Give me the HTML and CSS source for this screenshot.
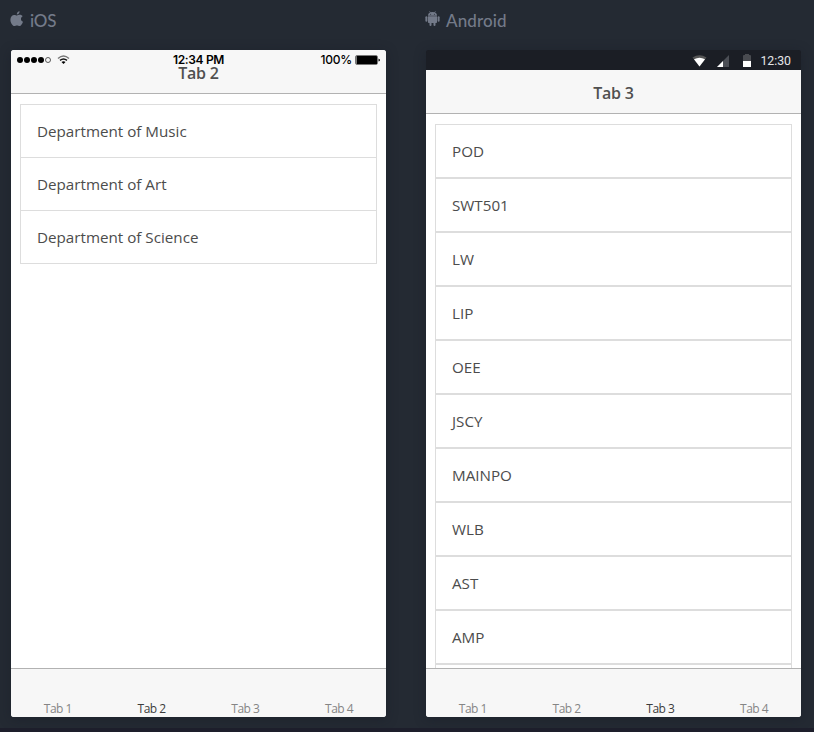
FILE: index.html
```html
<!DOCTYPE html>
<html lang="en">
<head>
<meta charset="utf-8">
<title>Preview</title>
<link rel="stylesheet" href="styles.css">
</head>
<body>
<main class="devices">
  <section class="device">
    <h2 class="platform">
      <svg class="apple" width="14" height="16" viewBox="0 0 14 16"><path d="M9.6 0.2C9.7 1.8 8.4 3.5 6.8 3.5 6.6 1.9 8 .4 9.600 .2zM6.900 4.500C7.700 4.500 8.500 3.800 9.900 3.800 11 3.800 12 4.400 12.600 5.200 10.200 6.700 10.600 9.700 13 10.700 12.400 12.500 11 15 9.600 15 8.600 15 8.200 14.400 7 14.400 5.800 14.400 5.300 15 4.400 15 2.500 15 .4 11.700 .4 8.700 .4 5.700 2.300 3.900 4.200 3.900 5.400 3.900 6.200 4.500 6.900 4.500z"/></svg>
      <span class="ios-label">iOS</span>
    </h2>
    <div class="phone">
      <header class="navbar ios-nav">
        <div class="ios-status">
          <div class="carrier">
            <svg width="54" height="12" viewBox="0 0 54 12"><circle cx="3" cy="6" r="3"/><circle cx="10" cy="6" r="3"/><circle cx="17" cy="6" r="3"/><circle cx="24" cy="6" r="3"/><circle cx="31" cy="6" r="2.500" fill="none" stroke="#333" stroke-width=".8"/><g fill="none" stroke="#111" stroke-width="1.400"><path d="M41 4.400Q46.500-.5 52 4.400" stroke="#777"/><path d="M43 6.400Q46.500 3.400 50 6.400"/></g><path d="M44.500 8Q46.500 6.400 48.500 8L46.500 10z"/></svg>
          </div>
          <span class="ios-time">12:34 PM</span>
          <span class="battery"><span>100%</span><svg width="25" height="10" viewBox="0 0 25 10"><rect x=".5" y=".5" width="22" height="9" rx="1.500" fill="none" stroke="#777"/><rect x="1.500" y="1" width="20.500" height="8" rx=".6"/><path d="M23.500 3.500Q25 4 25 5T23.500 6.500z"/></svg></span>
        </div>
        <h1 class="title">Tab 2</h1>
      </header>
      <div class="content">
        <ul class="list joined">
          <li><span>Department of Music</span></li>
          <li><span>Department of Art</span></li>
          <li><span>Department of Science</span></li>
        </ul>
      </div>
      <nav class="tabs"><a>Tab 1</a><a class="active">Tab 2</a><a>Tab 3</a><a>Tab 4</a></nav>
    </div>
  </section>
  <section class="device">
    <h2 class="platform">
      <svg class="robot" width="15" height="16" viewBox="0 0 15 16"><path d="M3 4.700C3 2.900 4 2 5 1.500L4.300.4 4.700.1 5.500 1.200Q7.500.6 9.500 1.200L10.300.1 10.700.4 10 1.500C11 2 12 2.900 12 4.700zM3 5.300H12V11.300Q12 12 11.200 12H10.500V14Q10.500 15 9.500 15T8.500 14V12H6.500V14Q6.500 15 5.500 15T4.500 14V12H3.800Q3 12 3 11.300z"/><rect x=".4" y="5.200" width="2" height="5.500" rx="1"/><rect x="12.600" y="5.200" width="2" height="5.500" rx="1"/><g fill="#242a33"><circle cx="5.600" cy="3.200" r=".5"/><circle cx="9.400" cy="3.200" r=".5"/></g></svg>
      <span class="android-label">Android</span>
    </h2>
    <div class="phone android">
      <div class="android-status">
        <svg width="60" height="14" viewBox="0 0 60 14"><path d="M.5 3.500Q7.500-1 14.500 3.500L7.500 12.500z" fill="#555"/><path d="M2 5.300Q7.500 2.200 13 5.300L7.500 12.500z" fill="#fff"/><path d="M25 13L37 1V13z" fill="#4b4e55"/><path d="M25 13L31 7V13z" fill="#fff"/><path d="M51 7V2Q51 1 52 1H53V0H57V1H58Q59 1 59 2V7z" fill="#494b50"/><path d="M51 7H59V13H51z" fill="#fff"/></svg>
        <span>12:30</span>
      </div>
      <header class="navbar"><h1 class="title">Tab 3</h1></header>
      <div class="content">
        <ul class="list">
          <li><span>POD</span></li>
          <li><span>SWT501</span></li>
          <li><span>LW</span></li>
          <li><span>LIP</span></li>
          <li><span>OEE</span></li>
          <li><span>JSCY</span></li>
          <li><span>MAINPO</span></li>
          <li><span>WLB</span></li>
          <li><span>AST</span></li>
          <li><span>AMP</span></li>
          <li></li>
        </ul>
      </div>
      <nav class="tabs"><a>Tab 1</a><a>Tab 2</a><a class="active">Tab 3</a><a>Tab 4</a></nav>
    </div>
  </section>
</main>
</body>
</html>
```
FILE: styles.css
```css
* { box-sizing: border-box; }
body {
  margin: 0;
  height: 732px;
  overflow: hidden;
  background: #242a33;
  border-bottom: 4px solid #1d1e2b;
  font-family: "Open Sans", "Noto Sans", sans-serif;
  color: #4c4c4c;
}
.devices { display: flex; gap: 40px; padding-left: 11px; }
.device { width: 375px; flex: none; }
.platform {
  display: flex;
  align-items: center;
  height: 50px;
  margin: 0;
  padding-bottom: 8px;
  color: #737a89;
  font: 500 17px/20px Lato, sans-serif;
}
.platform svg { fill: #737a89; margin: -4px 6px 0 -1px; }
.ios-label { letter-spacing: -.2px; }
.android-label { letter-spacing: .1px; }
.phone {
  display: flex;
  flex-direction: column;
  height: 667px;
  overflow: hidden;
  border-radius: 3px;
  background: #fff;
  box-shadow: 0 2px 12px rgba(20, 25, 35, .4);
}
.android { background: linear-gradient(#1b1e25 20px, #fff 20px); }
.navbar {
  position: relative;
  flex: none;
  height: 44px;
  background: #f7f7f7;
  border-bottom: 1px solid #b2b2b2;
}
.title {
  margin: 0;
  text-align: center;
  font-size: 16px;
  font-weight: 600;
  letter-spacing: -.2px;
  line-height: 46px;
  color: #505050;
}
.ios-status {
  position: absolute;
  inset: 0 0 auto 0;
  display: grid;
  grid-template-columns: 1fr auto 1fr;
  align-items: center;
  height: 20px;
  padding: 0 6px;
  color: #000;
  font: 500 12px/20px Inter, sans-serif;
}
.carrier, .battery { display: flex; align-items: center; }
.ios-time { font-weight: 600; letter-spacing: -.35px; }
.battery { justify-content: flex-end; gap: 3px; letter-spacing: -.2px; }
.android-status {
  display: flex;
  flex: none;
  align-items: center;
  justify-content: flex-end;
  gap: 8px;
  height: 20px;
  padding: 1px 10px 0 0;
  background: #1b1e25;
  color: #e4e5e7;
  font: 400 12.3px/20px Roboto, sans-serif;
}
.content { flex: 1; min-height: 0; overflow: hidden; padding: 10px 9px 0; background: #fff; }
.list { margin: 0; padding: 0; list-style: none; }
.list li {
  display: flex;
  align-items: center;
  height: 54px;
  padding: 0 16px;
  border: 1px solid #ddd;
  font-size: 15.2px;
}
.joined li + li { margin-top: -1px; }
.tabs {
  display: flex;
  flex: none;
  height: 49px;
  padding-top: 31px;
  border-top: 1px solid #b2b2b2;
  background: #f7f7f7;
}
.tabs a {
  flex: 1;
  text-align: center;
  font-size: 12px;
  letter-spacing: -.5px;
  line-height: 18px;
  color: #858585;
}
.tabs .active { color: #3c3c3c; }
```
